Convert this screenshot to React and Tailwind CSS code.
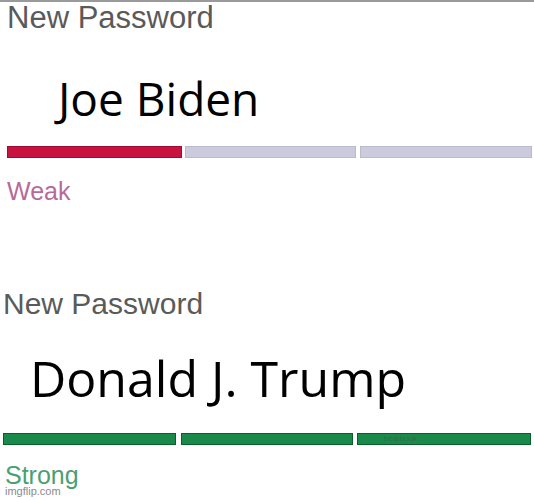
export default function App() {
  const label = "font-['Liberation_Sans',Arial,sans-serif] leading-none text-[#5a5a5a]";
  const big = "font-['Open_Sans',sans-serif] leading-none text-black whitespace-nowrap";

  return (
    <div className="relative w-[534px] h-[500px] overflow-hidden bg-white border-t-2 border-[#9a9a9a]">
      {/* weak section */}
      <div className={`${label} text-[31px] pl-[7px] h-[30px]`}>New Password</div>
      <div className={`${big} text-[46px] pl-[58px] mt-[43px] h-[46px]`}>Joe Biden</div>

      <div className="flex mt-[25px] pl-[7px] h-[12px]">
        <div className="w-[175px] h-full bg-[#c8123f] border border-[#9e0d30]" />
        <div className="w-[171px] h-full ml-[3px] bg-[#cbcbdd] border border-[#babacd]" />
        <div className="w-[172px] h-full ml-[4px] bg-[#cbcbdd] border border-[#babacd]" />
      </div>
      <div className="font-['Liberation_Sans',Arial,sans-serif] leading-none text-[25px] text-[#b8699b] pl-[7px] mt-[21px] h-[25px]">
        Weak
      </div>

      {/* strong section */}
      <div className={`${label} text-[30px] pl-[3px] mt-[85px] h-[29px]`}>New Password</div>
      <div className={`${big} text-[50px] pl-[30px] mt-[35px] h-[50px]`}>Donald J. Trump</div>

      <div className="flex mt-[30px] pl-[3px] h-[12px]">
        <div className="w-[173px] h-full bg-[#1a8a4a] border border-[#0d5c2e]" />
        <div className="w-[172px] h-full ml-[5px] bg-[#1a8a4a] border border-[#0d5c2e]" />
        <div className="flex items-center w-[174px] h-full ml-[4px] bg-[#1a8a4a] border border-[#0d5c2e]">
          <span className="ml-[26px] font-['Liberation_Sans',Arial,sans-serif] text-[8px] leading-none text-[#2f6e45]">
            bearbook
          </span>
        </div>
      </div>
      <div className="font-['Liberation_Sans',Arial,sans-serif] leading-none text-[25px] text-[#4c9f72] pl-[5px] mt-[18px] h-[25px]">
        Strong
      </div>

      <div className="absolute left-[5px] bottom-[3px] font-['Liberation_Sans',Arial,sans-serif] text-[11px] leading-none text-[#8a8a8a] [text-shadow:0_0_2px_#fff]">
        imgflip.com
      </div>
    </div>
  );
}
